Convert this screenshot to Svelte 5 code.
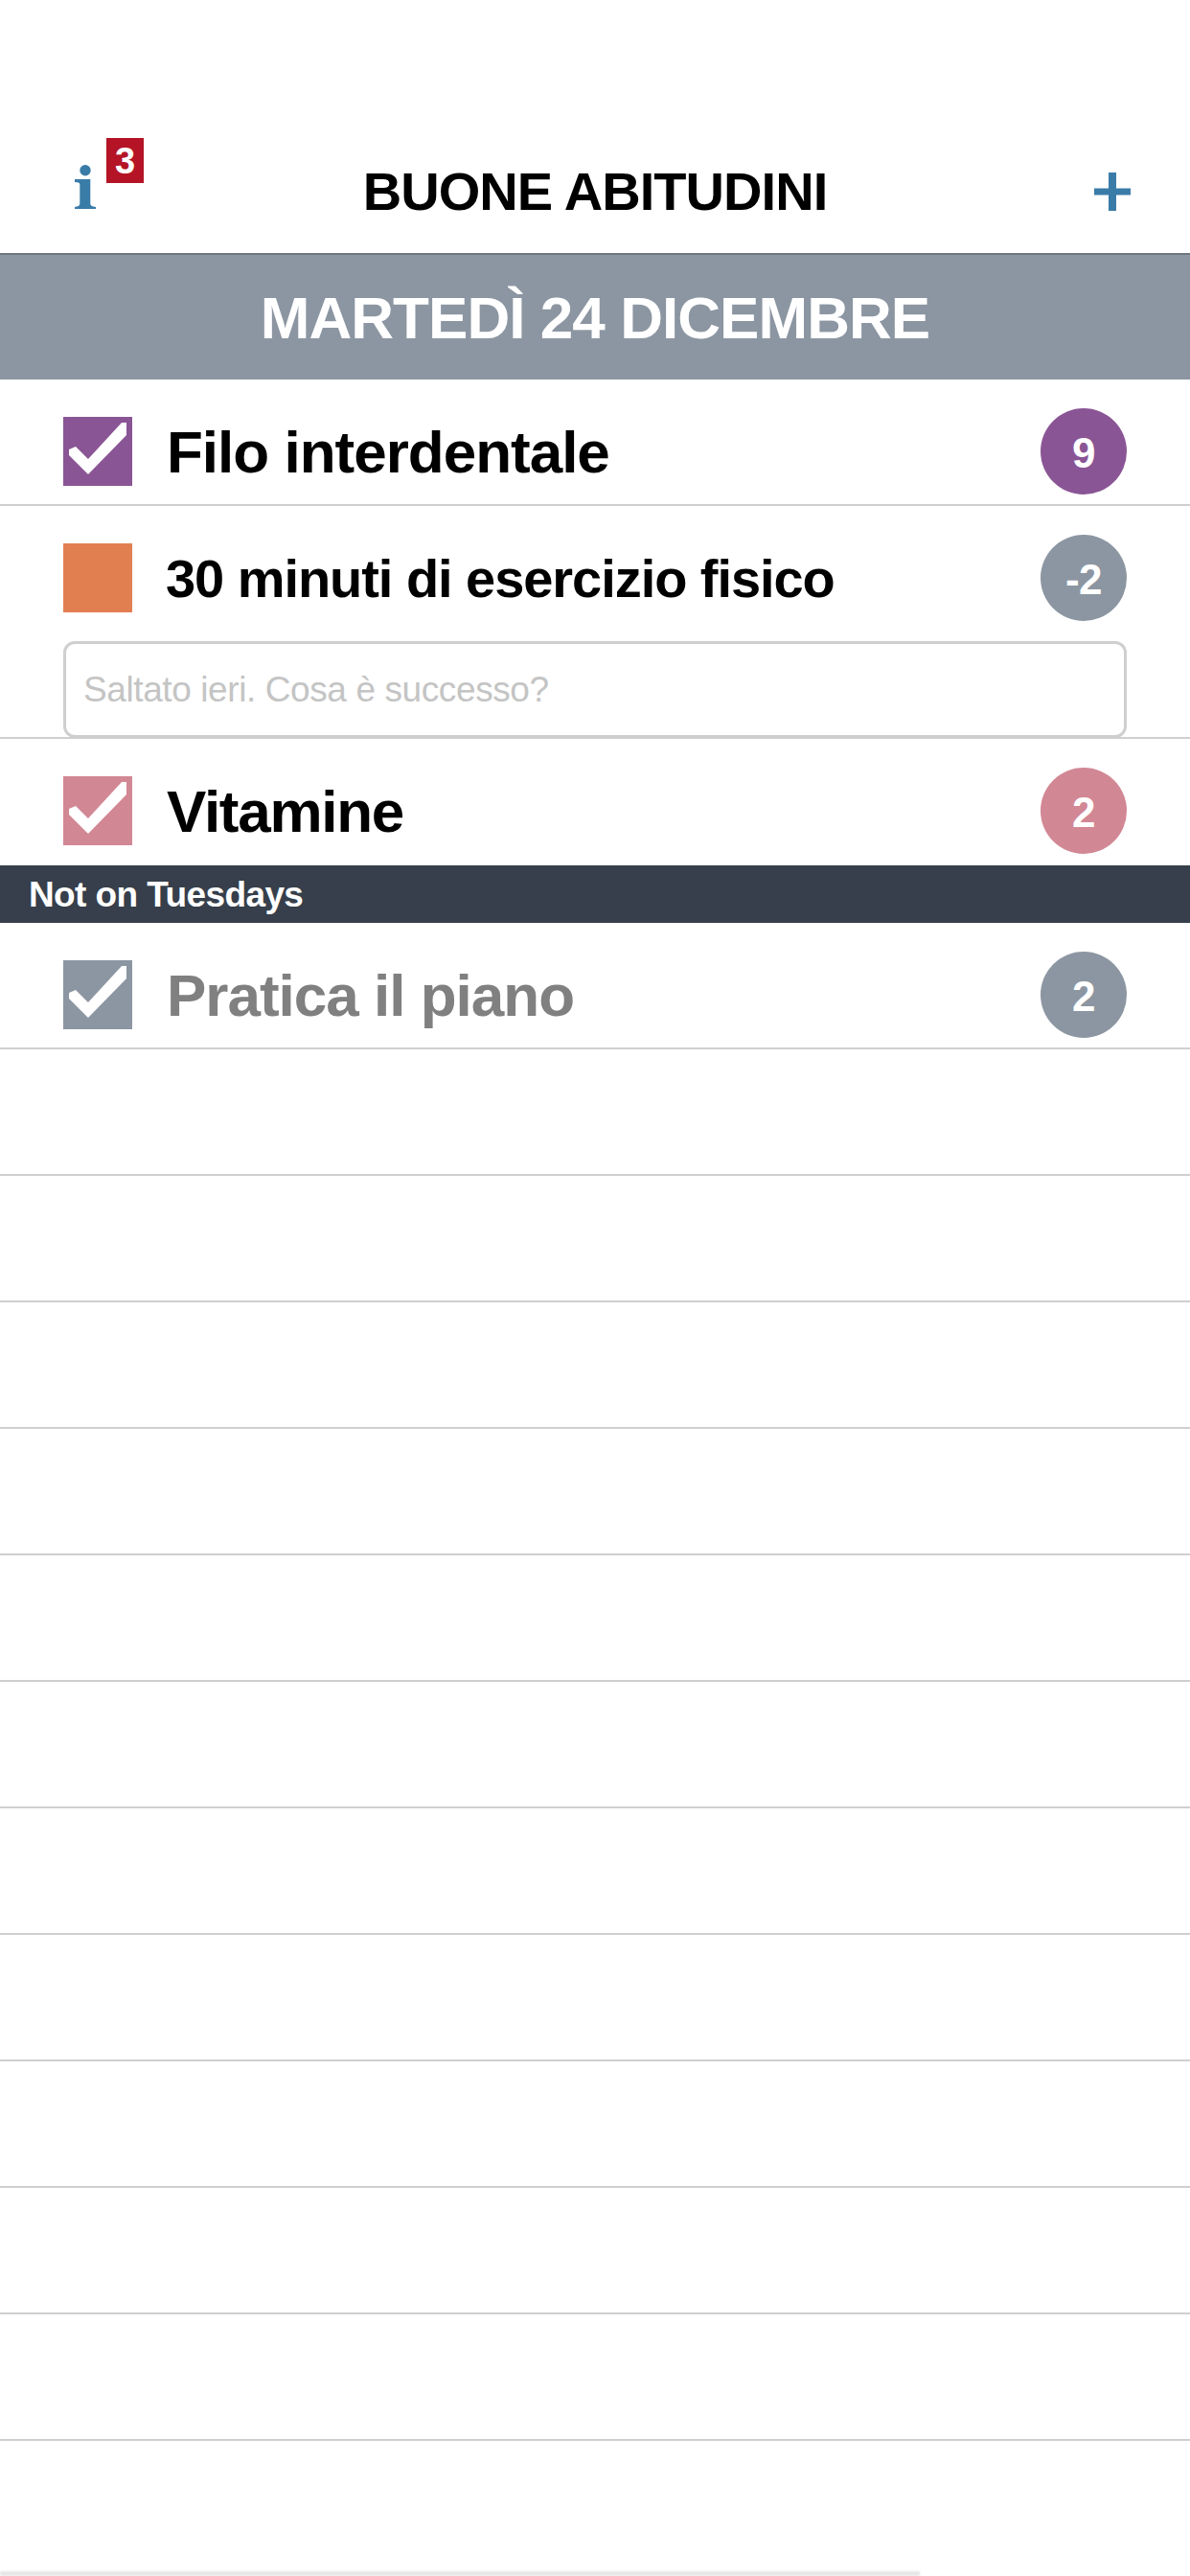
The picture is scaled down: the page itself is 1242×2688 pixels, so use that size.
<script>
  const rows = [
    { name: 'Filo interdentale', color: '#8a5595', count: '9', done: true, h: 'r1' },
    { name: '30 minuti di esercizio fisico', color: '#e27f51', count: '-2', badge: '#8c96a2', done: false, note: 'Saltato ieri. Cosa è successo?', h: 'r2' },
    { name: 'Vitamine', color: '#d28794', count: '2', done: true, h: 'r3' }
  ];
  const empty = Array.from({ length: 11 });
</script>

<div class="page">
  <header class="nav">
    <div class="info">
      <svg class="i" viewBox="0 0 22 46" width="22" height="46"><circle cx="11" cy="5.7" r="5.7" fill="#3a7ca8"/><path d="M0 15H16.3V41Q16.6 43.4 22 44V46H0V44Q5 43.4 5.3 41V20Q5 18.2 0 18Z" fill="#3a7ca8"/></svg>
      <span class="num">3</span>
    </div>
    <h1>BUONE ABITUDINI</h1>
    <svg class="plus" viewBox="0 0 38 40" width="38" height="40"><path d="M15 0h8v16.500h15v7H23V40h-8V23.500H0v-7h15z" fill="#3a7ca8"/></svg>
  </header>
  <div class="date">MARTEDÌ 24 DICEMBRE</div>

  {#snippet check(color, done)}
    <div class="box" style="background:{color}">
      {#if done}
        <svg viewBox="0 0 72 72" width="72" height="72"><path d="M6 34 L6 40 L26 60 L66 19 L66 6 L61 6 L26 44 L13 31 Z" fill="#fff"/></svg>
      {/if}
    </div>
  {/snippet}

  {#each rows as r}
    <section class="row {r.h}">
      <div class="main">
        {@render check(r.color, r.done)}
        <span class="name">{r.name}</span>
        <span class="count" style="background:{r.badge ?? r.color}">{r.count}</span>
      </div>
      {#if r.note}
        <div class="note">{r.note}</div>
      {/if}
    </section>
  {/each}

  <div class="group">Not on Tuesdays</div>

  <section class="row r4">
    <div class="main">
      {@render check('#8c96a2', true)}
      <span class="name muted">Pratica il piano</span>
      <span class="count" style="background:#8c96a2">2</span>
    </div>
  </section>

  {#each empty as _}
    <div class="blank"></div>
  {/each}
  <div class="home"></div>
</div>

<style>
  :global(body) { margin: 0; background: #fff; }
  .page { width: 1242px; height: 2688px; overflow: hidden; position: relative; font-family: "Liberation Sans", Arial, sans-serif; background: #fff; }
  .nav { height: 264px; box-sizing: border-box; padding: 144px 62px 0 78px; display: flex; justify-content: space-between; position: relative; }
  .info { position: relative; width: 72px; height: 75px; }
  .i { position: absolute; left: 0; top: 28px; }
  .num { position: absolute; left: 33px; top: 0; width: 39px; height: 47px; background: #b41425; color: #fff; font: bold 38px/48px "Liberation Sans", sans-serif; text-align: center; }
  h1 { position: absolute; left: 0; right: 0; top: 168px; margin: 0; text-align: center; font-size: 56px; letter-spacing: -0.95px; line-height: 63px; font-weight: 700; color: #000; }
  .plus { margin-top: 36px; flex: none; }
  .date { height: 132px; box-sizing: border-box; border-top: 2px solid #6e7780; background: #8c96a2; color: #fff; font-size: 62px; letter-spacing: -0.95px; font-weight: 700; line-height: 131px; text-align: center; }
  .row { box-sizing: border-box; border-bottom: 2px solid #cfcfcf; padding: 30px 66px 0; }
  .r1 { height: 132px; }
  .r2 { height: 243px; }
  .r3 { height: 132px; border-bottom: 0; }
  .r4 { height: 132px; }
  .main { display: flex; align-items: center; height: 90px; }
  .box { width: 72px; height: 72px; flex: none; }
  .box svg { display: block; }
  .name { flex: 1; margin-left: 36px; padding-top: 1px; font-size: 62px; letter-spacing: -1px; font-weight: 700; color: #000; line-height: 72px; white-space: nowrap; }
  .r2 .name { font-size: 56px; letter-spacing: -1.05px; margin-left: 35px; }
  .r3 .name { letter-spacing: -1.3px; }
  .muted { color: #808080; }
  .count { width: 90px; height: 90px; border-radius: 50%; flex: none; color: #fff; font-size: 44px; letter-spacing: -0.5px; font-weight: 700; line-height: 93px; text-align: center; }
  .note { box-sizing: border-box; margin-top: 21px; height: 101px; border: 3px solid #cfcfcf; border-radius: 12px; padding-left: 18px; font-size: 37px; letter-spacing: -0.4px; line-height: 96px; color: #c4c4c4; background: #fff; }
  .group { height: 60px; background: #363f4b; color: #fff; font-size: 37px; letter-spacing: -0.6px; font-weight: 700; line-height: 62px; padding-left: 30px; }
  .blank { height: 132px; box-sizing: border-box; border-bottom: 2px solid #cfcfcf; }
  .home { position: absolute; left: 0; bottom: 0; width: 960px; height: 5px; background: #e6e6e6; filter: blur(1px); }
</style>
